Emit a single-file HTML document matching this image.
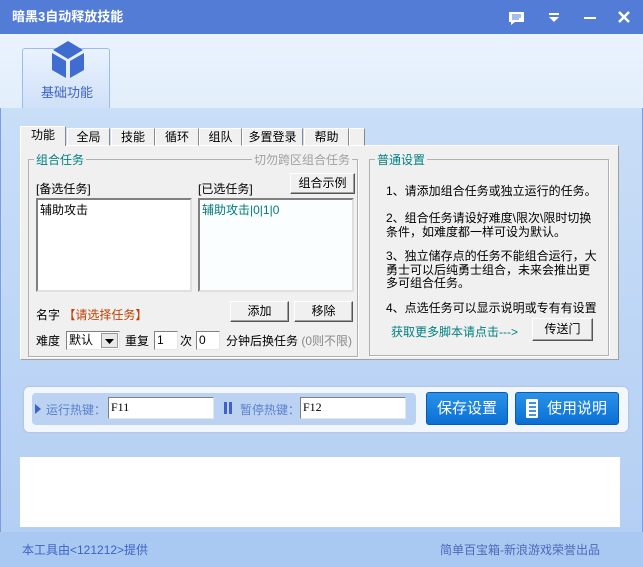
<!DOCTYPE html>
<html><head><meta charset="utf-8"><style>
*{margin:0;padding:0;box-sizing:border-box}
body{width:643px;height:567px;overflow:hidden;position:relative;font:12px "Liberation Sans","Noto Sans CJK SC","WenQuanYi Zen Hei",sans-serif;background:#a9c8f2;color:#000}
.a{position:absolute}
.title{left:0;top:0;width:643px;height:34px;background:#527cd5;color:#fff;font-weight:bold;font-size:13px;line-height:34px;padding-left:12px}
.hdr{left:0;top:34px;width:643px;height:74px;background:linear-gradient(#eaf3fe,#e3eefb)}
.mid{left:0;top:108px;width:643px;height:424px;background:linear-gradient(#c9def7,#bcd5f5 60%,#b4cff4);border-left:1px solid #7a9ee0;border-right:1px solid #7a9ee0}
.panel{left:20px;top:145px;width:599px;height:215px;background:#f0f0f0;border:1px solid #fff;border-right-color:#a0a0a0;border-bottom-color:#a0a0a0}
.tab{top:128px;height:18px;background:#f0f0f0;border:1px solid #fff;border-right-color:#888;text-align:center;line-height:17px;font-size:12px}
.grp{border:1px solid #b0b0b0;box-shadow:1px 1px 0 #fff}
.leg{background:#f0f0f0;color:#008080;font-size:12px;padding:0 2px}
.list{background:#fff;border:2px solid;border-color:#808080 #e0e0e0 #e0e0e0 #808080}
.btn{background:#f0f0f0;border:1px solid;border-color:#fff #555 #555 #fff;box-shadow:inset -1px -1px 0 #a0a0a0;text-align:center;line-height:18px}
.inp{background:#fff;border:1px solid;border-color:#808080 #e6e6e6 #e6e6e6 #808080;padding-left:2px;line-height:16px}
.bb{background:linear-gradient(#2a92e8,#0a6fd4);border:1px solid #0a5cb0;border-radius:3px;color:#fff;font-size:15px;text-align:center;line-height:31px}
.t{position:absolute;left:386px;white-space:nowrap;line-height:13.5px}
</style></head><body>
<div class="a title">暗黑3自动释放技能</div>
<svg class="a" style="left:508px;top:11px" width="18" height="14"><rect x="1" y="1" width="15" height="10" fill="#fff"/><path d="M3 11 L3 14 L7 11Z" fill="#fff"/><path d="M4 4h9M4 6h9M4 8h7" stroke="#527cd5" stroke-width="1"/></svg>
<svg class="a" style="left:548px;top:12px" width="12" height="12"><rect x="1" y="1" width="10" height="2" fill="#fff"/><path d="M1 5 L11 5 L6 10Z" fill="#fff"/></svg>
<div class="a" style="left:584px;top:17px;width:12px;height:2px;background:#fff"></div>
<svg class="a" style="left:618px;top:11px" width="12" height="12"><path d="M1 1L11 11M11 1L1 11" stroke="#fff" stroke-width="2.5"/></svg>
<div class="a hdr"></div>
<div class="a" style="left:22px;top:48px;width:88px;height:60px;border:1px solid #9cbcf0;border-bottom:none;background:linear-gradient(#eaf3fe,#cfe0f8);border-radius:3px 3px 0 0"></div>
<svg class="a" style="left:50px;top:40px" width="36" height="40"><path d="M18 1L33 10L18 19L3 10Z" fill="#3f6ccf"/><path d="M2 13L16 21L16 38L2 30Z" fill="#3f6ccf"/><path d="M34 13L20 21L20 38L34 30Z" fill="#3f6ccf"/></svg>
<div class="a" style="left:22px;top:82px;width:90px;text-align:center;color:#3e63c3;font-size:13px">基础功能</div>
<div class="a mid"></div>
<div class="a panel"></div>
<div class="a tab" style="left:20px;top:126px;height:20px;width:46px;border-bottom:none">功能</div>
<div class="a tab" style="left:67px;width:43px">全局</div>
<div class="a tab" style="left:111px;width:44px">技能</div>
<div class="a tab" style="left:155px;width:44px">循环</div>
<div class="a tab" style="left:199px;width:43px">组队</div>
<div class="a tab" style="left:242px;width:61px">多置登录</div>
<div class="a tab" style="left:304px;width:45px">帮助</div>
<div class="a tab" style="left:349px;width:16px"></div>
<div class="a grp" style="left:28px;top:159px;width:330px;height:198px"></div>
<div class="a leg" style="left:34px;top:151px">组合任务</div>
<div class="a leg" style="left:252px;top:151px;color:#a0a0a0">切勿跨区组合任务</div>
<div class="a" style="left:36px;top:180px">[备选任务]</div>
<div class="a" style="left:198px;top:180px">[已选任务]</div>
<div class="a btn" style="left:290px;top:173px;width:65px;height:21px;line-height:19px">组合示例</div>
<div class="a list" style="left:36px;top:198px;width:156px;height:94px;padding:1px 2px">辅助攻击</div>
<div class="a list" style="left:198px;top:198px;width:156px;height:94px;padding:1px 2px;background:#fbfefe;color:#007a7a">辅助攻击|0|1|0</div>
<div class="a" style="left:36px;top:306px">名字 <span style="color:#c04000">【请选择任务】</span></div>
<div class="a btn" style="left:230px;top:301px;width:59px;height:21px">添加</div>
<div class="a btn" style="left:294px;top:301px;width:59px;height:21px">移除</div>
<div class="a" style="left:36px;top:332px">难度</div>
<div class="a inp" style="left:66px;top:331px;width:54px;height:19px">默认</div>
<div class="a" style="left:101px;top:333px;width:17px;height:15px;background:#e8e8e8;border:1px solid #999"><svg width="15" height="13"><path d="M3 5L12 5L7.5 10Z" fill="#000"/></svg></div>
<div class="a" style="left:125px;top:332px">重复</div>
<div class="a inp" style="left:154px;top:331px;width:24px;height:19px">1</div>
<div class="a" style="left:180px;top:332px">次</div>
<div class="a inp" style="left:196px;top:331px;width:24px;height:19px">0</div>
<div class="a" style="left:226px;top:332px">分钟后换任务 <span style="color:#888">(0则不限)</span></div>
<div class="a grp" style="left:369px;top:159px;width:240px;height:197px"></div>
<div class="a leg" style="left:375px;top:151px">普通设置</div>
<div class="t" style="top:185px">1、请添加组合任务或独立运行的任务。</div>
<div class="t" style="top:212px">2、组合任务请设好难度\限次\限时切换<br>条件，如难度都一样可设为默认。</div>
<div class="t" style="top:250px">3、独立储存点的任务不能组合运行，大<br>勇士可以后纯勇士组合，未来会推出更<br>多可组合任务。</div>
<div class="t" style="top:302px">4、点选任务可以显示说明或专有有设置</div>
<div class="a" style="left:391px;top:323px;color:#008080">获取更多脚本请点击---&gt;</div>
<div class="a btn" style="left:532px;top:318px;width:61px;height:23px;line-height:21px">传送门</div>
<div class="a" style="left:24px;top:387px;width:604px;height:45px;background:#f2f6fd;border-radius:5px;box-shadow:0 0 2px #aac"></div>
<div class="a" style="left:32px;top:393px;width:384px;height:32px;background:#bcd2f2;border-radius:4px"></div>
<svg class="a" style="left:34px;top:403px" width="8" height="12"><path d="M1 1L7 6L1 11Z" fill="#3e63c3"/></svg>
<div class="a" style="left:46px;top:401px;color:#5b7fd0">运行热键：</div>
<div class="a inp" style="left:108px;top:397px;width:106px;height:22px;font-family:'Liberation Serif',serif;line-height:19px">F11</div>
<div class="a" style="left:224px;top:402px;width:3px;height:12px;background:#3e63c3"></div>
<div class="a" style="left:229px;top:402px;width:3px;height:12px;background:#3e63c3"></div>
<div class="a" style="left:240px;top:401px;color:#5b7fd0">暂停热键：</div>
<div class="a inp" style="left:300px;top:397px;width:106px;height:22px;font-family:'Liberation Serif',serif;line-height:19px">F12</div>
<div class="a bb" style="left:426px;top:392px;width:82px;height:33px">保存设置</div>
<div class="a bb" style="left:515px;top:392px;width:104px;height:33px;padding-left:20px">使用说明</div>
<svg class="a" style="left:524px;top:398px" width="16" height="21"><rect x="2" y="1" width="12" height="19" rx="1" fill="#fff"/><path d="M5 5h7M5 9h7M5 13h7M5 17h7" stroke="#0a6fd4" stroke-width="1.5"/></svg>
<div class="a" style="left:20px;top:457px;width:600px;height:70px;background:#fff"></div>
<div class="a" style="left:22px;top:541px;color:#3e63c3;font-size:12px">本工具由&lt;121212&gt;提供</div>
<div class="a" style="left:440px;top:541px;color:#4e6ab8;font-size:12px">简单百宝箱-新浪游戏荣誉出品</div>
</body></html>
